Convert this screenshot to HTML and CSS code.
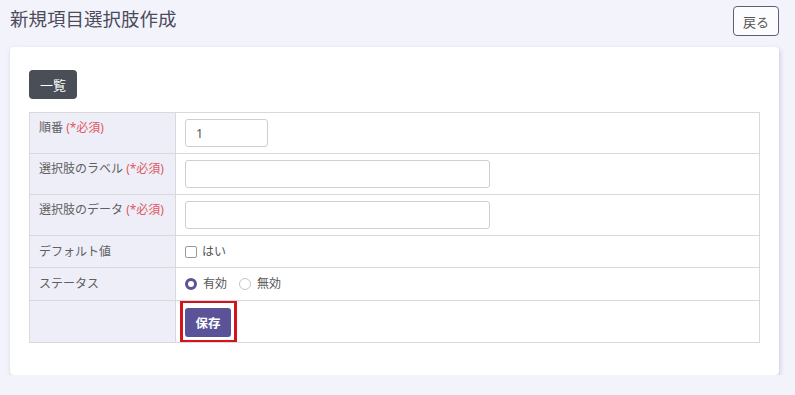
FILE: index.html
```html
<!DOCTYPE html>
<html lang="ja">
<head>
    <meta charset="UTF-8">
    <meta name="viewport" content="width=device-width, initial-scale=1.0">
    <title>新規項目選択肢作成</title>
    <link rel="stylesheet" href="styles.css">
</head>
<body>
    <div class="page-head">
        <h1>新規項目選択肢作成</h1>
        <button class="back-button">戻る</button>
    </div>
    <div class="card">
        <button class="list-button">一覧</button>
        <table class="form-table">
            <tr class="row-input">
                <th>順番 <span class="required">(*必須)</span></th>
                <td><input type="text" class="input-short" value="1"></td>
            </tr>
            <tr class="row-input">
                <th>選択肢のラベル <span class="required">(*必須)</span></th>
                <td><input type="text" class="input-long"></td>
            </tr>
            <tr class="row-input">
                <th>選択肢のデータ <span class="required">(*必須)</span></th>
                <td><input type="text" class="input-long"></td>
            </tr>
            <tr class="row-check">
                <th>デフォルト値</th>
                <td>
                    <div class="options">
                        <label class="check"><span class="box"></span>はい</label>
                    </div>
                </td>
            </tr>
            <tr class="row-radio">
                <th>ステータス</th>
                <td>
                    <div class="options">
                        <label class="radio"><span class="dot checked"></span>有効</label>
                        <label class="radio"><span class="dot"></span>無効</label>
                    </div>
                </td>
            </tr>
            <tr class="row-submit">
                <th></th>
                <td><div class="highlight"><button class="save-button">保存</button></div></td>
            </tr>
        </table>
    </div>
</body>
</html>
```

FILE: styles.css
```css
body {
    margin: 0;
    padding: 0 16px 0 10px;
    background-color: #f3f3fb;
    font-family: "Noto Sans", "Noto Sans CJK JP", sans-serif;
    color: #555;
}
.page-head {
    display: flex;
    justify-content: space-between;
    align-items: flex-start;
    height: 47px;
}
h1 {
    margin: 0;
    padding-top: 6px;
    font-size: 18.5px;
    font-weight: 400;
    line-height: 26px;
    color: #4b4b5b;
}
.back-button {
    margin-top: 6px;
    width: 46px;
    height: 30px;
    padding: 0;
    font-family: inherit;
    font-size: 13px;
    color: #555;
    background-color: #fcfcff;
    border: 1px solid #5d5d78;
    border-radius: 4px;
}
.card {
    background-color: #fff;
    border-radius: 4px;
    padding: 23px 19px 32px 19px;
    box-shadow: 1px 2px 5px rgba(60, 60, 110, 0.22);
}
.list-button {
    display: block;
    width: 48px;
    height: 29px;
    padding: 0;
    font-family: inherit;
    font-size: 13px;
    color: #fff;
    background-color: #4a4e57;
    border: none;
    border-radius: 4px;
}
.form-table {
    width: 100%;
    margin-top: 13px;
    border-collapse: collapse;
    font-size: 12px;
}
.form-table th,
.form-table td {
    border: 1px solid #d9d9d9;
    padding: 6px 9px;
    text-align: left;
    vertical-align: top;
    line-height: 20px;
}
.form-table th {
    width: 127px;
    white-space: nowrap;
    font-weight: 400;
    background-color: #eeeef9;
    color: #606060;
    padding-top: 5px;
}
.required {
    color: #df5a5e;
}
.row-input td {
    height: 28px;
}
input {
    box-sizing: border-box;
    height: 28px;
    padding: 0 10px;
    font-family: inherit;
    font-size: 12.5px;
    color: #555;
    border: 1px solid #cfcfcf;
    border-radius: 3px;
    display: block;
}
.input-short {
    width: 83px;
}
.input-long {
    width: 305px;
}
.row-check th,
.row-check td {
    height: 19px;
    line-height: 19px;
    padding-top: 6px;
    padding-bottom: 6px;
}
.row-radio th,
.row-radio td {
    height: 20px;
    padding-top: 6px;
    padding-bottom: 6px;
}
.options {
    display: flex;
    align-items: center;
    gap: 12px;
}
.check,
.radio {
    display: flex;
    align-items: center;
}
.box {
    width: 10px;
    height: 10px;
    margin: 1px 5px 0 0;
    border: 1px solid #9a9a9a;
    border-radius: 2px;
    background-color: #fff;
}
.dot {
    box-sizing: border-box;
    width: 12px;
    height: 12px;
    margin-right: 6px;
    border: 1px solid #c4c4c4;
    border-radius: 50%;
    background-color: #fff;
}
.dot.checked {
    border: 3.5px solid #5b5397;
    background-color: #fff;
}
.row-submit th,
.row-submit td {
    height: 41px;
    padding: 0;
    vertical-align: top;
}
.row-submit td {
    padding-left: 4px;
}
.highlight {
    display: flex;
    width: max-content;
    margin: -1px 0 -1px 0;
    padding: 5px 3px 3px 2px;
    border: 3px solid #d2141d;
}
.save-button {
    display: block;
    width: 46px;
    height: 29px;
    padding: 0;
    font-family: inherit;
    font-size: 12.5px;
    font-weight: 700;
    color: #fff;
    background-color: #5b5397;
    border: none;
    border-radius: 3px;
}
```
